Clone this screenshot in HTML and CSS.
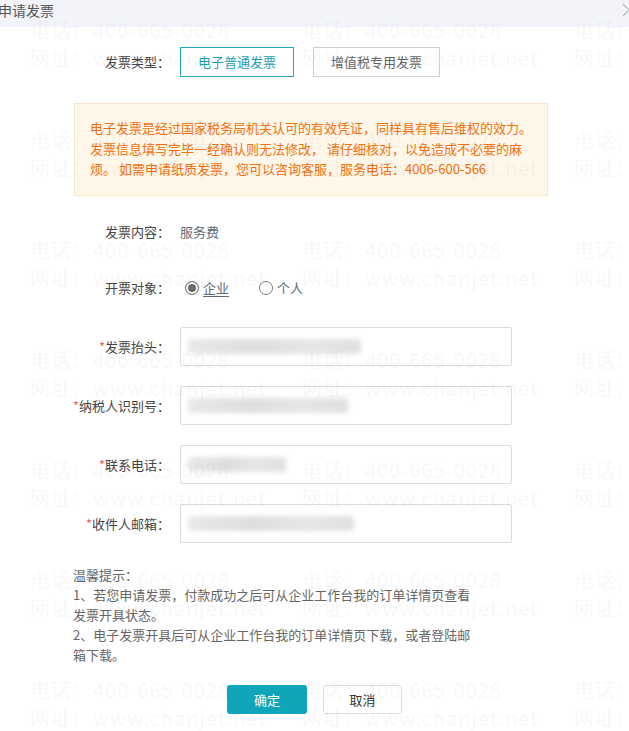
FILE: index.html
```html
<!DOCTYPE html>
<html lang="zh-CN">
<head>
    <meta charset="UTF-8">
    <title>申请发票</title>
    <link rel="stylesheet" href="styles.css">
</head>
<body>
<div class="dialog">
    <div class="dialog-hd">
        <h3>申请发票</h3>
        <svg class="close" width="14" height="14" viewBox="0 0 14 14"><path d="M1 1L13 13M13 1L1 13" stroke="#b5b8be" stroke-width="1.2" fill="none"/></svg>
    </div>
    <div class="dialog-bd">
        <div class="row row-type">
            <label>发票类型：</label>
            <div class="types">
                <span class="type-btn active">电子普通发票</span>
                <span class="type-btn">增值税专用发票</span>
            </div>
        </div>
        <div class="notice">电子发票是经过国家税务局机关认可的有效凭证，同样具有售后维权的效力。发票信息填写完毕一经确认则无法修改， 请仔细核对，以免造成不必要的麻烦。 如需申请纸质发票，您可以咨询客服，服务电话：4006-600-566</div>
        <div class="row">
            <label>发票内容：</label>
            <span class="value">服务费</span>
        </div>
        <div class="row">
            <label>开票对象：</label>
            <span class="radio on"><i></i><u>企业</u></span>
            <span class="radio"><i></i>个人</span>
        </div>
        <div class="row row-input">
            <label><em>*</em>发票抬头：</label>
            <div class="field"><span class="blur w1"></span></div>
        </div>
        <div class="row row-input">
            <label><em>*</em>纳税人识别号：</label>
            <div class="field"><span class="blur w2"></span></div>
        </div>
        <div class="row row-input">
            <label><em>*</em>联系电话：</label>
            <div class="field"><span class="blur w3"></span></div>
        </div>
        <div class="row row-input">
            <label><em>*</em>收件人邮箱：</label>
            <div class="field"><span class="blur w4"></span></div>
        </div>
        <div class="tips">
            温馨提示：<br>
            1、若您申请发票，付款成功之后可从企业工作台我的订单详情页查看发票开具状态。<br>
            2、电子发票开具后可从企业工作台我的订单详情页下载，或者登陆邮箱下载。
        </div>
        <div class="actions">
            <button class="btn btn-ok">确定</button>
            <button class="btn btn-cancel">取消</button>
        </div>
    </div>
    <!-- 水印 -->
    <div class="watermark">
        <div>电话：400-665-0028<br>网址：www.chanjet.net</div>
        <div>电话：400-665-0028<br>网址：www.chanjet.net</div>
        <div>电话：400-665-0028<br>网址：www.chanjet.net</div>
        <div>电话：400-665-0028<br>网址：www.chanjet.net</div>
        <div>电话：400-665-0028<br>网址：www.chanjet.net</div>
        <div>电话：400-665-0028<br>网址：www.chanjet.net</div>
        <div>电话：400-665-0028<br>网址：www.chanjet.net</div>
        <div>电话：400-665-0028<br>网址：www.chanjet.net</div>
        <div>电话：400-665-0028<br>网址：www.chanjet.net</div>
        <div>电话：400-665-0028<br>网址：www.chanjet.net</div>
        <div>电话：400-665-0028<br>网址：www.chanjet.net</div>
        <div>电话：400-665-0028<br>网址：www.chanjet.net</div>
        <div>电话：400-665-0028<br>网址：www.chanjet.net</div>
        <div>电话：400-665-0028<br>网址：www.chanjet.net</div>
        <div>电话：400-665-0028<br>网址：www.chanjet.net</div>
        <div>电话：400-665-0028<br>网址：www.chanjet.net</div>
        <div>电话：400-665-0028<br>网址：www.chanjet.net</div>
        <div>电话：400-665-0028<br>网址：www.chanjet.net</div>
        <div>电话：400-665-0028<br>网址：www.chanjet.net</div>
        <div>电话：400-665-0028<br>网址：www.chanjet.net</div>
        <div>电话：400-665-0028<br>网址：www.chanjet.net</div>
    </div>
</div>
</body>
</html>
```
FILE: styles.css
```css
*{
    box-sizing: border-box;
}
body{
    margin:0;
    background:#fff;
    color:#444;
    font:13px/20px "Noto Sans CJK SC", "Microsoft YaHei", sans-serif;
}
.dialog{
    position: relative;
    width:629px;
    height:731px;
    overflow: hidden;
    background:#fff;
}
.dialog-hd{
    display:flex;
    justify-content: space-between;
    align-items: flex-start;
    height:27px;
    background:#f2f4f9;
}
.dialog-hd h3{
    margin:0 0 0 -2px;
    font-weight: normal;
    font-size:14px;
    line-height:20px;
    color:#555;
}
.dialog-hd .close{
    margin:3px -7px 0 0;
}
.dialog-bd{
    padding-top:20px;
}
.row{
    display:flex;
    align-items: center;
    min-height:40px;
    margin-top:16px;
}
.row label{
    flex:none;
    width:170px;
    margin-right:10px;
    text-align: right;
    color:#444;
}
.row label em{
    font-style: normal;
    color:#f25d5d;
}
.row-type{
    margin-top:0;
    min-height:30px;
}
.types{
    display:flex;
    gap:19px;
}
.type-btn{
    height:30px;
    line-height:28px;
    padding:0 17px;
    border:1px solid #cfcfcf;
    color:#666;
}
.type-btn.active{
    border-color:#22a5b4;
    color:#1a9fb0;
}
.notice{
    width:474px;
    margin:26px 0 0 74px;
    padding:14px 13px 15px 15px;
    line-height:20.5px;
    background:#fff7e9;
    border:1px solid #fbe6c8;
    color:#f3700f;
}
.row .value{
    color:#5f6977;
}
.radio{
    display:flex;
    align-items: center;
    margin-left:5px;
    margin-right:30px;
    color:#5c6878;
}
.radio + .radio{
    margin-left:0;
}
.radio i{
    width:14px;
    height:14px;
    margin-right:4px;
    border:1px solid #7b7b7b;
    border-radius:50%;
}
.radio.on i{
    background:#6c6c6c;
    box-shadow:inset 0 0 0 2px #fff;
}
.radio u{
    text-underline-offset:3px;
}
.row-input{
    margin-top:19px;
}
.row-input:first-of-type{
    margin-top:16px;
}
.field{
    display:flex;
    align-items: center;
    width:332px;
    height:39px;
    padding:0 7px;
    border:1px solid #dcdcdc;
    border-radius:2px;
    background:#fff;
}
.blur{
    height:15px;
    border-radius:4px;
    background:linear-gradient(90deg, #e8e8e8 0, #dedede 40%, #e6e6e6 70%, #e0e0e0 100%);
    filter:blur(2.5px);
}
.blur.w1{ width:173px; }
.blur.w2{ width:160px; }
.blur.w3{ width:98px; }
.blur.w4{ width:166px; }
.tips{
    width:403px;
    margin:21px 0 0 73px;
    color:#666;
}
.actions{
    display:flex;
    justify-content: center;
    gap:16px;
    margin-top:20px;
}
.btn{
    height:29px;
    padding:0;
    border-radius:3px;
    font:13px/27px "Noto Sans CJK SC", "Microsoft YaHei", sans-serif;
    cursor:pointer;
}
.btn-ok{
    width:80px;
    border:0;
    background:#10a6b9;
    color:#fff;
}
.btn-cancel{
    width:79px;
    border:1px solid #dedede;
    background:#fff;
    color:#333;
}
.watermark{
    position:absolute;
    left:0;
    top:0;
    right:0;
    bottom:0;
    display:grid;
    grid-template-columns: repeat(3, 272px);
    grid-auto-rows:110px;
    padding:16px 0 0 30px;
    pointer-events: none;
    white-space: nowrap;
    font-size:20px;
    line-height:28px;
    letter-spacing:1px;
    color:rgba(0,0,0,.055);
}
```
